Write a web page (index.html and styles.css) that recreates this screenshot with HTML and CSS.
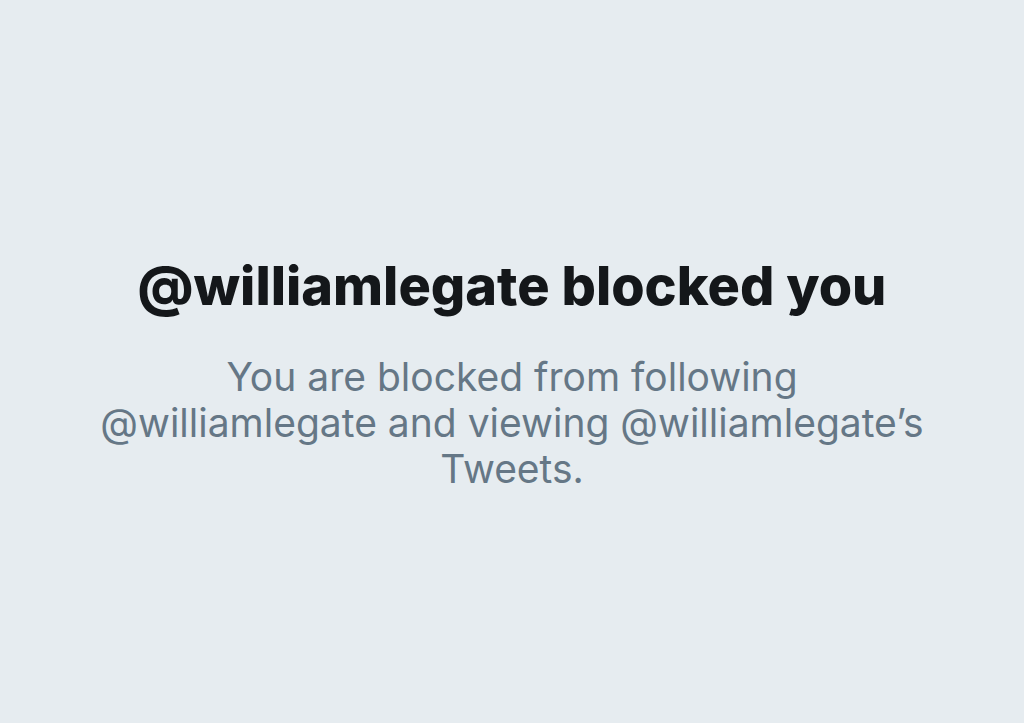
FILE: index.html
```html
<!DOCTYPE html>
<html lang="en">
<head>
<meta charset="utf-8">
<title>Blocked</title>
<link rel="stylesheet" href="styles.css">
</head>
<body>
<main class="page">
  <section class="notice">
    <h1 class="title">@williamlegate blocked you</h1>
    <p class="message">You are blocked from following @williamlegate and viewing @williamlegate’s Tweets.</p>
  </section>
</main>
</body>
</html>
```
FILE: styles.css
```css
html, body {
  margin: 0;
  padding: 0;
  height: 100%;
}
body {
  background: #e6ecf0;
  font-family: Inter, "Noto Sans", sans-serif;
}
.page {
  height: 100%;
  display: flex;
  align-items: center;
  justify-content: center;
}
.notice {
  display: flex;
  flex-direction: column;
  align-items: center;
  text-align: center;
  padding-top: 23px;
}
.title {
  margin: 0;
  font-size: 54px;
  font-weight: 800;
  color: #14171a;
  letter-spacing: 0;
  line-height: 62px;
}
.message {
  margin: 37px 0 0;
  max-width: 840px;
  font-size: 39px;
  font-weight: 400;
  color: #657786;
  line-height: 46px;
}
```
